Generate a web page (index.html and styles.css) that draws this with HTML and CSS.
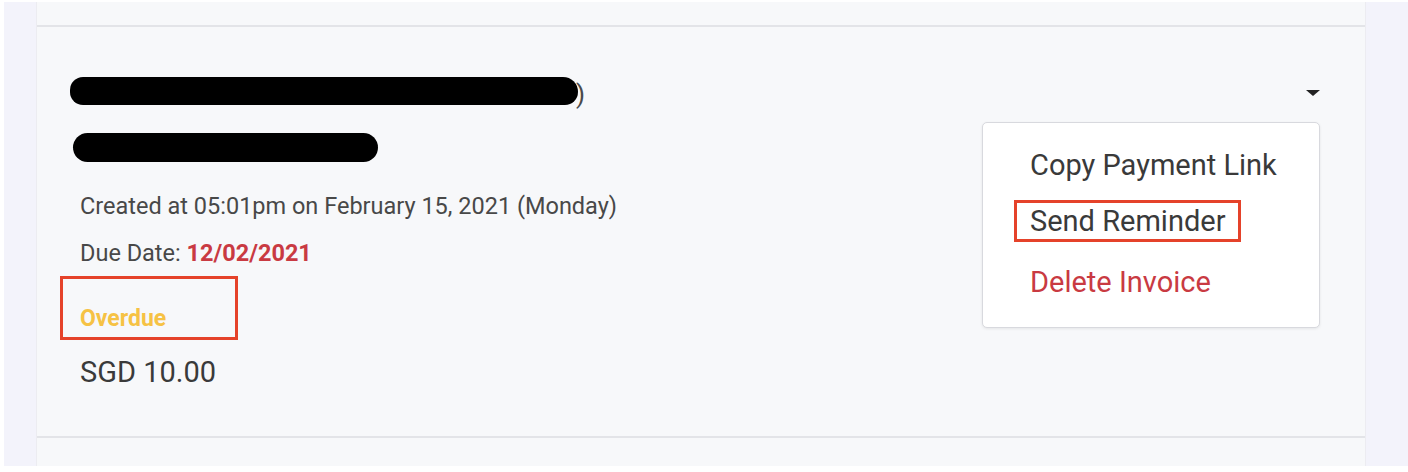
FILE: index.html
```html
<!DOCTYPE html>
<html>
<head>
<meta charset="utf-8">
<link rel="stylesheet" href="styles.css">
</head>
<body>
<div class="frame">
  <div class="panel">
    <div class="prev-item"></div>
    <div class="item">
      <div class="info">
        <div class="name-line"><span class="blob blob-1"></span><span class="paren">)</span></div>
        <div class="title-line"><span class="blob blob-2"></span></div>
        <div class="created">Created at 05:01pm on February 15, 2021 (Monday)</div>
        <div class="due">Due Date: <span class="due-date">12/02/2021</span></div>
        <div class="status-box"><span class="status">Overdue</span></div>
        <div class="amount">SGD 10.00</div>
      </div>
      <div class="actions">
        <span class="caret"></span>
        <div class="menu">
          <div class="menu-item">Copy Payment Link</div>
          <div class="menu-item highlighted">Send Reminder</div>
          <div class="menu-item danger">Delete Invoice</div>
        </div>
      </div>
    </div>
    <div class="next-item"></div>
  </div>
</div>
</body>
</html>
```

FILE: styles.css
```css
html, body {
  margin: 0;
  padding: 0;
  background: #ffffff;
  font-family: Roboto, "Liberation Sans", sans-serif;
}

.frame {
  margin: 2px 0 6px 4px;
  height: 464px;
  background: #f3f3fb;
  padding-left: 32px;
  box-sizing: border-box;
  overflow: hidden;
}

.panel {
  width: 1330px;
  height: 464px;
  background: #f7f8fa;
  border-left: 1px solid #ececf1;
  border-right: 1px solid #ececf1;
  box-sizing: border-box;
  display: flex;
  flex-direction: column;
}

.prev-item {
  height: 23px;
  border-bottom: 2px solid #e3e4e8;
  flex: none;
}

.item {
  height: 409px;
  border-bottom: 2px solid #e3e4e8;
  display: flex;
  justify-content: space-between;
  flex: none;
}

.next-item {
  flex: 1;
}

.info {
  padding-left: 33px;
  padding-top: 49px;
  display: flex;
  flex-direction: column;
  align-items: flex-start;
}

.name-line {
  display: flex;
  align-items: center;
  height: 30px;
}

.blob {
  display: block;
  background: #000;
  border-radius: 15px;
}

.blob-1 {
  width: 508px;
  height: 28px;
  border-radius: 14px 16px 14px 14px;
}

.paren {
  font-size: 26px;
  color: #4a4a4a;
  margin-left: -2px;
  position: relative;
  top: 3px;
}

.title-line {
  margin-top: 27px;
  padding-left: 3px;
}

.blob-2 {
  width: 305px;
  height: 29px;
}

.created {
  margin-top: 30px;
  margin-left: 10px;
  font-size: 23.5px;
  line-height: 28px;
  color: #484848;
}

.due {
  margin-top: 19px;
  margin-left: 10px;
  font-size: 23.5px;
  line-height: 28px;
  color: #484848;
}

.due-date {
  color: #c93a42;
  font-weight: 700;
}

.status-box {
  margin-top: 9px;
  margin-left: -10px;
  width: 178px;
  height: 64px;
  border: 3px solid #e5422a;
  box-sizing: border-box;
  padding-left: 17px;
  padding-top: 28px;
}

.status {
  font-size: 23px;
  line-height: 24px;
  font-weight: 700;
  color: #f6c244;
  display: block;
}

.amount {
  margin-top: 16px;
  margin-left: 10px;
  font-size: 29px;
  line-height: 32px;
  color: #3a3a3a;
}

.actions {
  position: relative;
  width: 400px;
  padding-right: 44px;
  padding-top: 63px;
  display: flex;
  flex-direction: column;
  align-items: flex-end;
}

.caret {
  width: 0;
  height: 0;
  border-left: 7px solid transparent;
  border-right: 7px solid transparent;
  border-top: 6px solid #222;
  margin-right: 1px;
}

.menu {
  position: absolute;
  top: 95px;
  right: 45px;
  width: 338px;
  height: 206px;
  box-sizing: border-box;
  background: #ffffff;
  border: 1px solid #d8d9de;
  border-radius: 5px;
  box-shadow: 0 1px 3px rgba(0,0,0,0.08);
  padding: 26px 0 0 31px;
  display: flex;
  flex-direction: column;
  align-items: flex-start;
}

.menu-item {
  font-size: 29px;
  line-height: 32px;
  color: #3a3a3a;
  margin-bottom: 19px;
  padding: 0 13px 0 16px;
  box-sizing: border-box;
}

.menu-item.highlighted {
  border: 3px solid #e5422a;
  margin-bottom: 24px;
  padding: 2px 13px 2px 13px;
}

.menu-item.danger {
  color: #c93a42;
}
```
